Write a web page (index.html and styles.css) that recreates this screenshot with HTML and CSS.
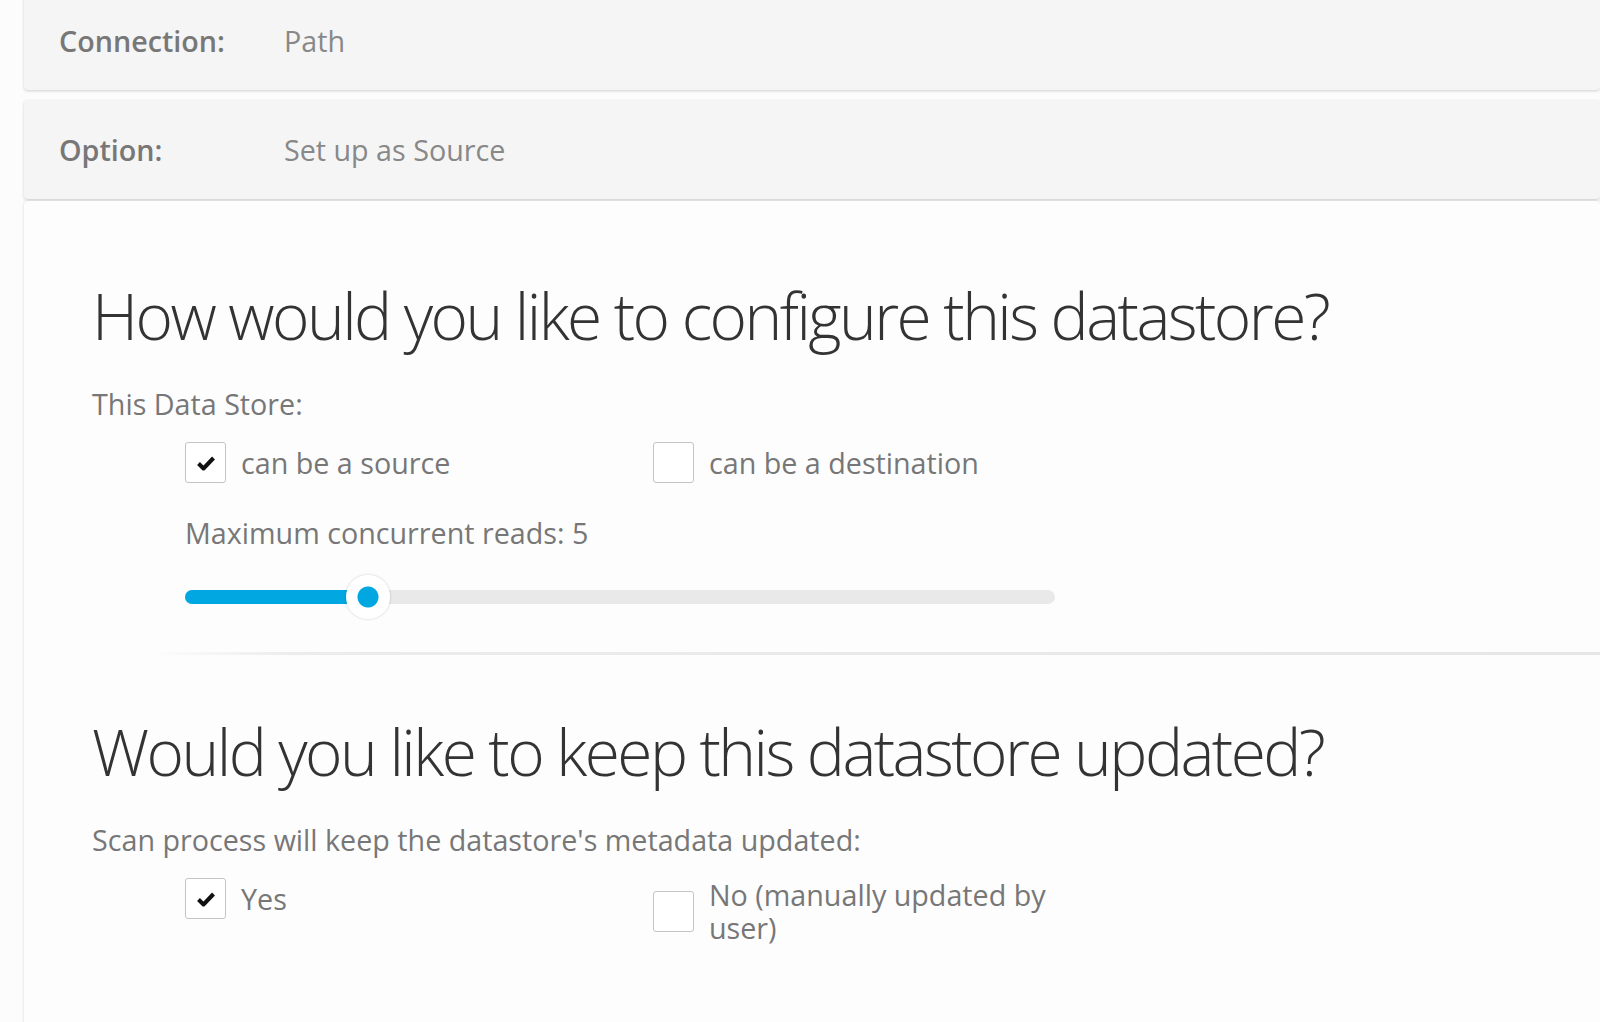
FILE: index.html
```html
<!DOCTYPE html>
<html lang="en">

<head>
    <meta charset="UTF-8">
    <meta name="viewport" content="width=device-width, initial-scale=1.0">
    <title>Datastore Setup</title>
    <link rel="stylesheet" href="styles.css">
</head>

<body>
    <div class="wizard">
        <div class="summary-row first">
            <span class="summary-label">Connection:</span>
            <span class="summary-value">Path</span>
        </div>
        <div class="summary-row">
            <span class="summary-label">Option:</span>
            <span class="summary-value">Set up as Source</span>
        </div>

        <div class="panel">
            <section class="block">
                <h1>How would you like to configure this datastore?</h1>
                <p class="hint">This Data Store:</p>
                <div class="options">
                    <label class="option">
                        <span class="box checked">
                            <svg viewBox="0 0 20 16" width="20" height="16"><path d="M2.5 8.5l5 5 10-10.5" fill="none" stroke="#111" stroke-width="4" stroke-linejoin="round"/></svg>
                        </span>
                        <span class="option-text">can be a source</span>
                    </label>
                    <label class="option">
                        <span class="box"></span>
                        <span class="option-text">can be a destination</span>
                    </label>
                </div>

                <div class="reads">
                    <p class="reads-label">Maximum concurrent reads: <span id="readsValue">5</span></p>
                    <div class="slider">
                        <div class="slider-fill" style="width: 21%"></div>
                        <div class="slider-handle" style="left: 21%"></div>
                    </div>
                </div>
            </section>

            <div class="divider"></div>

            <section class="block">
                <h1>Would you like to keep this datastore updated?</h1>
                <p class="hint">Scan process will keep the datastore's metadata updated:</p>
                <div class="options">
                    <label class="option">
                        <span class="box checked">
                            <svg viewBox="0 0 20 16" width="20" height="16"><path d="M2.5 8.5l5 5 10-10.5" fill="none" stroke="#111" stroke-width="4" stroke-linejoin="round"/></svg>
                        </span>
                        <span class="option-text">Yes</span>
                    </label>
                    <label class="option">
                        <span class="box"></span>
                        <span class="option-text">No (manually updated by user)</span>
                    </label>
                </div>
            </section>
        </div>
    </div>
</body>

</html>
```

FILE: styles.css
```css
body {
    margin: 0;
    font-family: "Open Sans", Arial, sans-serif;
    background-color: #fcfcfc;
    color: #777;
    overflow: hidden;
}

.wizard {
    padding-left: 24px;
}

.summary-row {
    display: flex;
    align-items: center;
    height: 99px;
    padding-left: 35px;
    margin-bottom: 2px;
    background-color: #f5f5f5;
    border-radius: 4px;
    box-shadow: 0px 1px 3px rgba(0, 0, 0, 0.18);
    font-size: 28.7px;
}

.summary-row.first {
    margin-top: -9px;
    margin-bottom: 10px;
}

.summary-label {
    width: 225px;
    font-weight: 600;
    color: #777;
}

.summary-value {
    color: #888;
}

.panel {
    background-color: #fdfdfd;
    border-radius: 4px;
    box-shadow: 0px 0px 3px rgba(0, 0, 0, 0.15);
    min-height: 840px;
}

.block {
    padding-left: 68px;
}

.block:first-child {
    padding-top: 76px;
}

h1 {
    margin: 0;
    font-size: 64px;
    font-weight: 300;
    line-height: 77px;
    letter-spacing: -2.55px;
    color: #333;
}

.hint {
    margin: 30px 0 18px;
    font-size: 28.7px;
    line-height: 40px;
}

.options {
    display: flex;
    align-items: flex-start;
    padding-left: 93px;
}

.option {
    display: flex;
    align-items: center;
    width: 468px;
    cursor: pointer;
}

.box {
    display: flex;
    align-items: center;
    justify-content: center;
    flex: none;
    width: 39px;
    height: 39px;
    margin-right: 15px;
    border: 1px solid #c4c4c4;
    border-radius: 3px;
    background-color: #fff;
}

.option-text {
    max-width: 350px;
    font-size: 28.7px;
    line-height: 33px;
}

.reads {
    padding: 30px 0 0 93px;
}

.reads-label {
    margin: 0 0 20px;
    font-size: 28.7px;
    line-height: 40px;
}

.slider {
    position: relative;
    width: 870px;
    height: 14px;
    margin: 37px 0 16px;
    border-radius: 7px;
    background-color: #e9e9e9;
}

.slider-fill {
    height: 100%;
    border-radius: 7px;
    background-color: #00a7e1;
}

/* handle: white ring with a blue dot */
.slider-handle {
    position: absolute;
    top: 50%;
    width: 44px;
    height: 44px;
    margin: -22px 0 0 -22px;
    border-radius: 50%;
    background: radial-gradient(circle, #00a7e1 0, #00a7e1 10px, #fff 11px);
    box-shadow: 0px 0px 3px rgba(0, 0, 0, 0.2);
}

.divider {
    height: 3px;
    margin: 48px 0 58px 124px;
    background: linear-gradient(to right, rgba(236, 236, 236, 0), #ececec 10%, #e6e6e6);
}
```
